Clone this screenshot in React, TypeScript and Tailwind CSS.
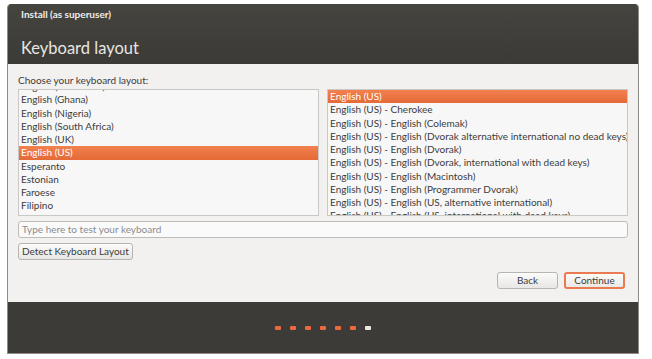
import React from 'react'

const leftItems = [
  'English (Cameroon)',
  'English (Ghana)',
  'English (Nigeria)',
  'English (South Africa)',
  'English (UK)',
  'English (US)',
  'Esperanto',
  'Estonian',
  'Faroese',
  'Filipino',
  'Finnish',
]

const rightItems = [
  'English (US)',
  'English (US) - Cherokee',
  'English (US) - English (Colemak)',
  'English (US) - English (Dvorak alternative international no dead keys)',
  'English (US) - English (Dvorak)',
  'English (US) - English (Dvorak, international with dead keys)',
  'English (US) - English (Macintosh)',
  'English (US) - English (Programmer Dvorak)',
  'English (US) - English (US, alternative international)',
  'English (US) - English (US, international with dead keys)',
]

function LayoutList({ items, selected, offset }: { items: string[]; selected: string; offset: string }) {
  return (
    <div className="flex-1 h-[127px] overflow-hidden border border-[#c9c8c4] bg-[#f7f7f7]">
      <div className={offset}>
        {items.map((item) => (
          <div
            key={item}
            className={
              item === selected
                ? 'h-[13.25px] leading-[13.25px] pl-[2px] whitespace-nowrap text-white bg-gradient-to-b from-[#f2814f] to-[#e46a36]'
                : 'h-[13.25px] leading-[13.25px] pl-[2px] whitespace-nowrap text-[#3c3c3c]'
            }
          >
            {item}
          </div>
        ))}
      </div>
    </div>
  )
}

export default function App() {
  return (
    <div className="w-[652px] h-[359px] bg-white pl-[7px] pt-[4px] font-['Lato',sans-serif] text-[10px]">
      <div className="w-[632px] rounded-t-[4px] overflow-hidden border-x border-b border-[#8d8c88] flex flex-col">
        {/* Header */}
        <div className="h-[60px] bg-gradient-to-b from-[#45443f] to-[#3b3a36] pl-[13px] pt-[3px]">
          <p className="text-[10px] font-bold text-[#eeeeec] leading-[14px]">Install (as superuser)</p>
          <p className="mt-[16px] text-[16.5px] text-[#e8e6e0] leading-[22px]">Keyboard layout</p>
        </div>

        {/* Body */}
        <div className="h-[238px] bg-[#f2f1f0] px-[10px] pt-[9px] flex flex-col">
          <p className="text-[#3c3c3c] leading-[14px]">Choose your keyboard layout:</p>
          <div className="mt-[2px] flex gap-[8px]">
            <LayoutList items={leftItems} selected="English (US)" offset="-mt-[10px]" />
            <LayoutList items={rightItems} selected="English (US)" offset="mt-0" />
          </div>
          <div className="mt-[5px] h-[17px] rounded-[3px] border border-[#bdbcb8] bg-[#fafafa] pl-[3px] flex items-center text-[#8c8c8c]">
            Type here to test your keyboard
          </div>
          <div className="mt-[5px] flex">
            <button className="h-[17px] px-[3px] rounded-[3px] border border-[#b6b5b1] bg-gradient-to-b from-[#fbfbfa] to-[#e8e7e5] text-[#3c3c3c] flex items-center">
              Detect Keyboard Layout
            </button>
          </div>
          <div className="mt-[12px] flex justify-end gap-[6px] pr-[3px]">
            <button className="w-[61px] h-[17px] rounded-[3px] border border-[#b6b5b1] bg-gradient-to-b from-[#fbfbfa] to-[#e8e7e5] text-[#3c3c3c] flex items-center justify-center">
              Back
            </button>
            <button className="w-[61px] h-[17px] rounded-[3px] border-2 border-[#ea7a52] bg-gradient-to-b from-[#fbfbfa] to-[#ebe9e6] text-[#3c3c3c] flex items-center justify-center">
              Continue
            </button>
          </div>
        </div>

        {/* Footer */}
        <div className="h-[51px] bg-[#3c3b37] flex items-center justify-center gap-[9px]">
          {[0, 1, 2, 3, 4, 5].map((i) => (
            <span key={i} className="w-[6px] h-[4px] rounded-[1px] bg-[#e96b3c]" />
          ))}
          <span className="w-[6px] h-[4px] rounded-[1px] bg-[#e9e8e4]" />
        </div>
      </div>
    </div>
  )
}
